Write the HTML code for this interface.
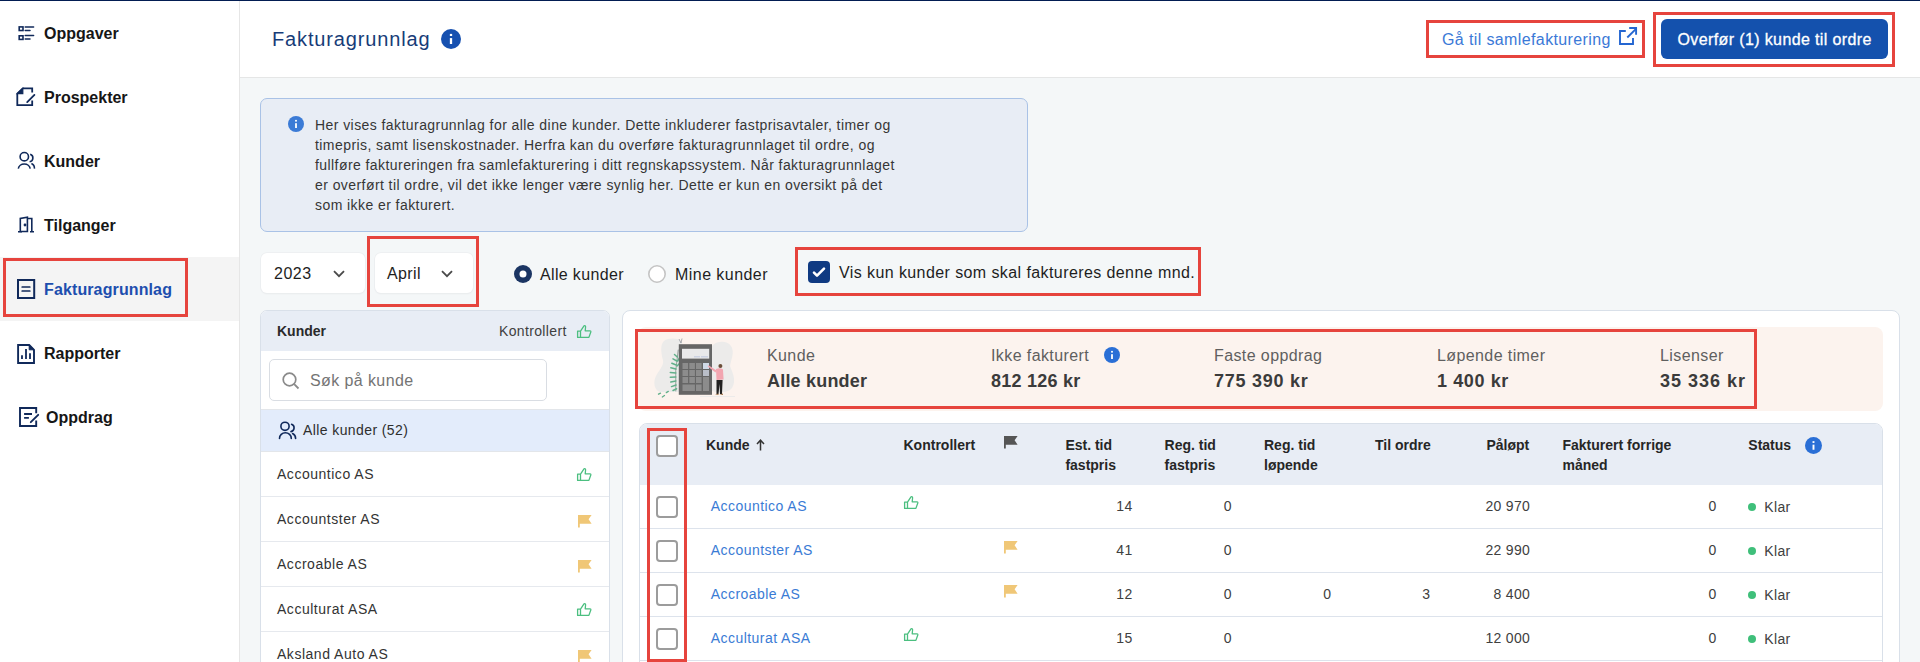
<!DOCTYPE html>
<html><head><meta charset="utf-8">
<style>
*{box-sizing:border-box;margin:0;padding:0}
html,body{width:1920px;height:662px;overflow:hidden;background:#f4f7f8;font-family:"Liberation Sans",sans-serif;color:#222}
.a{position:absolute}
.t{position:absolute;line-height:1;white-space:nowrap}
.red{position:absolute;border:3px solid #e6443d}
svg{position:absolute;overflow:visible}
</style></head><body>
<!-- top strip -->
<div class="a" style="left:0;top:0;width:1920px;height:1px;background:#021d52;z-index:5"></div>

<!-- SIDEBAR -->
<div class="a" id="sidebar" style="left:0;top:1px;width:240px;height:661px;background:#fff;border-right:1px solid #e6e6e6">
</div>
<div class="a" style="left:0;top:257px;width:239px;height:64px;background:#f4f4f4"></div>


<!-- nav icons -->
<svg style="left:0;top:0" width="60" height="440" viewBox="0 0 60 440">
 <g fill="none" stroke="#10295a" stroke-width="1.6">
  <rect x="19.2" y="26.9" width="3.8" height="3.6"/>
  <rect x="19.2" y="35.8" width="3.8" height="3.6"/>
  <path d="M25.2 27.1 H33.6 M25.2 30.5 H30 M25.2 35.6 H33.6 M25.2 38.9 H30" stroke-width="1.5" stroke-linecap="round"/>
 </g>
 <g fill="none" stroke="#10295a" stroke-width="1.8">
  <path d="M32.2 92.5 V88.3 H22.8 L17.3 93.6 V105.2 H32.2 V100.6"/>
  <path d="M17.3 93.6 H22.8 V88.3 Z" fill="#10295a" stroke-width="1.2"/>
  <path d="M27.2 102.1 L34.4 94.9" stroke-linecap="round"/>
 </g>
 <g fill="none" stroke="#10295a" stroke-width="1.6">
  <circle cx="24.3" cy="156.7" r="4.2"/>
  <path d="M18.3 168.6 A6 5.2 0 0 1 30.2 168.6"/>
  <path d="M30.2 154.3 A3.8 3.8 0 0 1 29.6 161.7"/>
  <path d="M31.4 163.6 A5 5 0 0 1 34.4 168.6"/>
 </g>
 <g fill="none" stroke="#10295a" stroke-width="1.6">
  <path d="M20.3 231.5 V218.5 L27.4 217.3 V231.5 Z"/>
  <path d="M27.4 218.5 H31.8 V231.8"/>
  <path d="M18 231.8 H22 M30 231.8 H34"/>
  <circle cx="25" cy="225" r="0.6" fill="#10295a"/>
 </g>
 <g fill="none" stroke="#10295a" stroke-width="2">
  <rect x="18" y="280" width="16.2" height="18"/>
  <path d="M22.2 287 H29.8 M22.2 291 H29.8" stroke-width="1.7" stroke-linecap="round"/>
 </g>
 <g fill="none" stroke="#10295a" stroke-width="1.9">
  <path d="M18.1 345 H29.2 L34 349.8 V363 H18.1 Z"/>
  <path d="M29.2 345 V349.8 H34 Z" fill="#10295a" stroke-width="1"/>
  <path d="M22 355.3 V358.9 M26 349.1 V358.9 M30 353.2 V358.9" stroke-width="1.8"/>
 </g>
 <g fill="none" stroke="#10295a" stroke-width="1.9">
  <path d="M36.2 413.2 V408 H20 V426 H36.2 V420.5"/>
  <path d="M24.1 414 H32 M24.1 417.9 H28.9" stroke-width="1.8"/>
  <path d="M30.8 422.2 L38.2 414.8" stroke-linecap="round"/>
 </g>
</svg>

<!-- nav text -->
<div class="t" style="left:44px;top:25.7px;font-size:16px;font-weight:700;color:#161616">Oppgaver</div>
<div class="t" style="left:44px;top:89.7px;font-size:16px;font-weight:700;color:#161616">Prospekter</div>
<div class="t" style="left:44px;top:153.7px;font-size:16px;font-weight:700;color:#161616">Kunder</div>
<div class="t" style="left:44px;top:217.7px;font-size:16px;font-weight:700;color:#161616">Tilganger</div>
<div class="t" style="left:44px;top:281.7px;font-size:16px;font-weight:700;color:#1d4eae;letter-spacing:0.12px">Fakturagrunnlag</div>
<div class="t" style="left:44px;top:345.7px;font-size:16px;font-weight:700;color:#161616">Rapporter</div>
<div class="t" style="left:46px;top:409.7px;font-size:16px;font-weight:700;color:#161616">Oppdrag</div>

<div class="red" style="left:3px;top:258px;width:185px;height:59px"></div>
<!-- HEADER -->
<div class="a" style="left:240px;top:1px;width:1680px;height:77px;background:#fff;border-bottom:1px solid #e5e6e6"></div>
<div class="t" style="left:272px;top:29px;font-size:20px;color:#173c78;letter-spacing:0.85px">Fakturagrunnlag</div>
<svg style="left:441px;top:29px" width="20" height="20" viewBox="0 0 20 20"><circle cx="10" cy="10" r="10" fill="#1650b0"/><rect x="8.85" y="9.1" width="2.3" height="5.9" fill="#fff"/><rect x="8.85" y="4.9" width="2.3" height="2.1" fill="#fff"/></svg>

<div class="t" style="left:1442px;top:31.8px;font-size:16px;color:#3b79d7;letter-spacing:0.38px">Gå til samlefakturering</div>
<svg style="left:1612px;top:22px" width="30" height="28" viewBox="1612 22 30 28"><g fill="none" stroke="#2466d1" stroke-width="1.9"><path d="M1625.8 31 H1620 V44 H1633 V38.1"/><path d="M1629.2 28 H1636.1 V34.7"/><path d="M1627.3 37.5 L1636 28.8"/></g></svg>
<div class="red" style="left:1426px;top:20px;width:219px;height:38px"></div>
<div class="a" style="left:1661px;top:19px;width:227px;height:40px;background:#1451ad;border-radius:6px"></div>
<div class="t" style="left:1677.5px;top:31.8px;font-size:16px;color:#fff;letter-spacing:0.38px;-webkit-text-stroke:0.3px #fff">Overfør (1) kunde til ordre</div>
<div class="red" style="left:1653px;top:12px;width:242px;height:55px"></div>

<!-- INFO BOX -->
<div class="a" style="left:260px;top:98px;width:768px;height:134px;background:#e8edf5;border:1px solid #a9c2e6;border-radius:7px"></div>
<svg style="left:288px;top:116px" width="16" height="16" viewBox="0 0 16 16"><circle cx="8" cy="8" r="8" fill="#3b7bd6"/><rect x="7.1" y="7.2" width="1.8" height="4.8" fill="#fff"/><rect x="7.1" y="3.9" width="1.8" height="1.7" fill="#fff"/></svg>
<div class="a" style="left:315px;top:115px;font-size:14px;line-height:20px;color:#363636;letter-spacing:0.43px;white-space:nowrap">Her vises fakturagrunnlag for alle dine kunder. Dette inkluderer fastprisavtaler, timer og<br>timepris, samt lisenskostnader. Herfra kan du overføre fakturagrunnlaget til ordre, og<br>fullføre faktureringen fra samlefakturering i ditt regnskapssystem. Når fakturagrunnlaget<br>er overført til ordre, vil det ikke lenger være synlig her. Dette er kun en oversikt på det<br>som ikke er fakturert.</div>

<!-- FILTERS -->
<div class="a" style="left:261px;top:252.5px;width:104px;height:40.5px;background:#fff;border-radius:6px;box-shadow:0 0 0 0.8px #eceef0,0 1px 2px rgba(0,0,0,0.06)"></div>
<div class="t" style="left:274px;top:265.5px;font-size:16px;color:#1e1e1e;letter-spacing:0.5px">2023</div>
<svg style="left:333px;top:270px" width="12" height="8" viewBox="0 0 12 8"><path d="M1 1.2 L6 6.2 L11 1.2" fill="none" stroke="#4a4a4a" stroke-width="1.8"/></svg>
<div class="a" style="left:375px;top:252.5px;width:98px;height:40.5px;background:#fff;border-radius:6px;box-shadow:0 0 0 0.8px #eceef0,0 1px 2px rgba(0,0,0,0.06)"></div>
<div class="t" style="left:387px;top:265.5px;font-size:16px;color:#1e1e1e;letter-spacing:0.4px">April</div>
<svg style="left:441px;top:270px" width="12" height="8" viewBox="0 0 12 8"><path d="M1 1.2 L6 6.2 L11 1.2" fill="none" stroke="#4a4a4a" stroke-width="1.8"/></svg>
<div class="red" style="left:367px;top:236px;width:112px;height:71px"></div>

<svg style="left:514px;top:265px" width="18" height="18" viewBox="0 0 18 18"><circle cx="9" cy="9" r="9" fill="#1b3563"/><circle cx="9" cy="9" r="3.5" fill="#fff"/></svg>
<div class="t" style="left:540px;top:267px;font-size:16px;color:#1e1e1e;letter-spacing:0.35px">Alle kunder</div>
<svg style="left:648px;top:265px" width="18" height="18" viewBox="0 0 18 18"><circle cx="9" cy="9" r="8.2" fill="#fff" stroke="#c4c4c4" stroke-width="1.6"/></svg>
<div class="t" style="left:675px;top:267px;font-size:16px;color:#1e1e1e;letter-spacing:0.45px">Mine kunder</div>

<svg style="left:808px;top:261px" width="22" height="22" viewBox="0 0 22 22"><rect x="0" y="0" width="22" height="22" rx="4" fill="#0f3a82"/><path d="M6 11.6 L9 14.6 L16 7.6" fill="none" stroke="#fff" stroke-width="2.6" stroke-linecap="round" stroke-linejoin="round"/></svg>
<div class="t" style="left:839px;top:264.5px;font-size:16px;color:#1e1e1e;letter-spacing:0.41px">Vis kun kunder som skal faktureres denne mnd.</div>
<div class="red" style="left:795px;top:247px;width:406px;height:49px"></div>

<!-- LEFT PANEL -->
<div class="a" style="left:260px;top:310px;width:350px;height:360px;background:#fff;border:1px solid #d9e0e9;border-radius:7px;overflow:hidden">
  <div class="a" style="left:0;top:0;width:350px;height:40px;background:#e8edf5"></div>
  <div class="a" style="left:0;top:98px;width:350px;height:42px;background:#e3ecfb"></div>
  <div class="a" style="left:0;top:98px;width:350px;height:1px;background:#e3e6ea"></div>
  <div class="a" style="left:0;top:140px;width:350px;height:1px;background:#e3e6ea"></div>
  <div class="a" style="left:0;top:185px;width:350px;height:1px;background:#e6e9ee"></div>
  <div class="a" style="left:0;top:230px;width:350px;height:1px;background:#e6e9ee"></div>
  <div class="a" style="left:0;top:275px;width:350px;height:1px;background:#e6e9ee"></div>
  <div class="a" style="left:0;top:320px;width:350px;height:1px;background:#e6e9ee"></div>
</div>
<div class="t" style="left:277px;top:324px;font-size:14px;font-weight:700;color:#2a2a2a">Kunder</div>
<div class="t" style="left:499px;top:324px;font-size:14px;color:#404040;letter-spacing:0.35px">Kontrollert</div>
<div class="a" style="left:269px;top:359px;width:278px;height:42px;border:1px solid #d9dde3;border-radius:5px;background:#fff"></div>
<svg style="left:281.7px;top:371.6px" width="18" height="18" viewBox="0 0 18 18"><circle cx="7.5" cy="7.5" r="6.3" fill="none" stroke="#8a8a8a" stroke-width="1.7"/><path d="M12.2 12.2 L16.5 16.5" stroke="#8a8a8a" stroke-width="1.8"/></svg>
<div class="t" style="left:310px;top:373px;font-size:16px;color:#747474;letter-spacing:0.4px">Søk på kunde</div>
<div class="t" style="left:303px;top:423px;font-size:14px;color:#2e2e2e;letter-spacing:0.4px">Alle kunder (52)</div>
<div class="t" style="left:277px;top:467px;font-size:14px;color:#333;letter-spacing:0.52px">Accountico AS</div>
<div class="t" style="left:277px;top:512px;font-size:14px;color:#333;letter-spacing:0.52px">Accountster AS</div>
<div class="t" style="left:277px;top:557px;font-size:14px;color:#333;letter-spacing:0.52px">Accroable AS</div>
<div class="t" style="left:277px;top:602px;font-size:14px;color:#333;letter-spacing:0.52px">Acculturat ASA</div>
<div class="t" style="left:277px;top:647px;font-size:14px;color:#333;letter-spacing:0.52px">Aksland Auto AS</div>

<svg style="left:576.9px;top:325.4px" width="16" height="15" viewBox="0 0 16 15"><path d="M0.6 6.1 H3.5 V12.4 H0.6 Z M3.5 6.1 L7 0.8 Q8.4 0.3 8.6 1.8 L8.2 5.8 H13 Q14 6 13.8 7 L11.9 12.4 H3.5" fill="none" stroke="#4cbf80" stroke-width="1.3" stroke-linejoin="round"/></svg>
<svg style="left:576.9px;top:468.4px" width="16" height="15" viewBox="0 0 16 15"><path d="M0.6 6.1 H3.5 V12.4 H0.6 Z M3.5 6.1 L7 0.8 Q8.4 0.3 8.6 1.8 L8.2 5.8 H13 Q14 6 13.8 7 L11.9 12.4 H3.5" fill="none" stroke="#4cbf80" stroke-width="1.3" stroke-linejoin="round"/></svg>
<svg style="left:578px;top:515px" width="14" height="13" viewBox="0 0 14 13"><path d="M0 0 H13.6 L10.6 4.3 L13.6 8.8 H1.8 V12.6 H0 Z" fill="#f0c777"/></svg>
<svg style="left:578px;top:560px" width="14" height="13" viewBox="0 0 14 13"><path d="M0 0 H13.6 L10.6 4.3 L13.6 8.8 H1.8 V12.6 H0 Z" fill="#f0c777"/></svg>
<svg style="left:576.9px;top:603.4px" width="16" height="15" viewBox="0 0 16 15"><path d="M0.6 6.1 H3.5 V12.4 H0.6 Z M3.5 6.1 L7 0.8 Q8.4 0.3 8.6 1.8 L8.2 5.8 H13 Q14 6 13.8 7 L11.9 12.4 H3.5" fill="none" stroke="#4cbf80" stroke-width="1.3" stroke-linejoin="round"/></svg>
<svg style="left:578px;top:650px" width="14" height="13" viewBox="0 0 14 13"><path d="M0 0 H13.6 L10.6 4.3 L13.6 8.8 H1.8 V12.6 H0 Z" fill="#f0c777"/></svg>
<svg style="left:278px;top:421px" width="20" height="20" viewBox="0 0 20 20"><g fill="none" stroke="#10295a" stroke-width="1.6" stroke-linecap="round"><circle cx="7" cy="5.3" r="4.1"/><path d="M1.5 17.4 A5.9 5.6 0 0 1 13.3 17.4"/><path d="M13.6 3.3 A3.8 3.8 0 0 1 13 10.6"/><path d="M14.6 12.5 A5.5 5.5 0 0 1 17.6 17.4"/></g></svg>
<!-- RIGHT PANEL -->
<div class="a" style="left:622px;top:310px;width:1278px;height:360px;background:#fff;border:1px solid #d9e0e9;border-radius:8px"></div>
<div class="a" style="left:638px;top:327px;width:1245px;height:84px;background:#fcf3ee;border-radius:8px"></div>

<svg style="left:650px;top:332px" width="90" height="72" viewBox="650 332 90 72">
<path d="M668 339 C676 337 684 340 682 346 L682 392 L660 392 C654 390 653 382 656 376 C659 370 664 366 663 360 C661 352 659 341 668 339 Z" fill="#ecebea"/>
<path d="M712 346 C716 341 727 340 731 346 C735 352 731 360 730 366 C732 372 737 380 732 388 C728 393 718 393 712 391 Z" fill="#ecebea"/>
<g stroke="#62b08a" stroke-width="1.5" stroke-linecap="round" fill="none">
<path d="M678.2 350 Q674.5 370 675.8 391" stroke="#7c8a84" stroke-width="0.8"/>
<path d="M677.3 357 L674.5 354.5 M676.8 361 L673 358.8 M676.2 365 L671.8 363.2 M675.9 369 L670.8 367.8 M675.8 373 L670.3 372.5 M675.8 377 L670.3 377.2 M675.9 381 L670.8 382 M676.1 385 L671.5 386.6 M676.6 388.8 L673 390.5"/>
<path d="M677.6 361 L679.5 358 M677 366 L679.5 363.5" />
<path d="M658.5 394.2 L660.5 393.2 M662.3 397 L664.5 395.5 M666.3 392.6 L668.3 391.4" stroke-width="1.3"/>
</g>
<path d="M679 339 L681 343 M682 338.5 L681 343" stroke="#8a8f96" stroke-width="0.7"/>
<rect x="678.8" y="344.2" width="33.2" height="50.6" fill="#666"/>
<rect x="682" y="348.8" width="27.2" height="9.8" fill="#e9e9ea"/>
<rect x="694" y="356.2" width="6" height="1.2" fill="#c5cde0"/><rect x="701" y="356.2" width="7" height="1.2" fill="#c5cde0"/>
<g fill="#8c8c8c">
<rect x="682.5" y="363" width="5.6" height="6"/><rect x="689.3" y="363" width="5.6" height="6"/><rect x="696" y="363" width="5.6" height="6"/>
<rect x="682.5" y="370" width="5.6" height="6"/><rect x="689.3" y="370" width="5.6" height="6"/><rect x="696" y="370" width="5.6" height="6"/>
<rect x="682.5" y="377" width="5.6" height="6"/><rect x="689.3" y="377" width="5.6" height="6"/><rect x="696" y="377" width="5.6" height="6"/>
<rect x="682.5" y="384.5" width="12.4" height="6.5"/><rect x="696" y="384.5" width="5.6" height="6.5"/>
<rect x="703" y="377" width="6" height="14"/>
</g>
<rect x="703" y="363" width="6" height="6" fill="#cfd9e6"/><rect x="703" y="370" width="6" height="6" fill="#b9bec8"/>
<circle cx="720.4" cy="366" r="2" fill="#6b4f3a"/>
<path d="M716 369 Q720 367.5 723 369.5 L723.6 379.5 L716.5 380 Z" fill="#f2a5b0"/>
<path d="M716.5 370.5 L708.5 365.2 L707.8 366.5 L715.5 372.5 Z" fill="#f2a5b0"/>
<path d="M716.5 380 L722.6 380 L722 394 L720 394 L719.6 384 L718.5 394 L716.5 394 Z" fill="#222"/>
<path d="M715 394.5 L718.5 393.5 L718.5 395 Z M719.5 394.5 L723 393.5 L723 395 Z" fill="#a0784e"/>
<path d="M700 396.5 H735" stroke="#ecebea" stroke-width="1"/>
</svg>
<div class="t" style="left:767px;top:348px;font-size:16px;color:#5f5f5f;letter-spacing:0.4px">Kunde</div>
<div class="t" style="left:767px;top:371.8px;font-size:18px;font-weight:700;color:#3b3b3b;letter-spacing:0.2px">Alle kunder</div>
<div class="t" style="left:991px;top:348px;font-size:16px;color:#5f5f5f;letter-spacing:0.4px">Ikke fakturert</div>
<svg style="left:1104px;top:347px" width="16" height="16" viewBox="0 0 16 16"><circle cx="8" cy="8" r="8" fill="#2a6fd6"/><rect x="7.1" y="7.2" width="1.8" height="4.8" fill="#fff"/><rect x="7.1" y="3.9" width="1.8" height="1.7" fill="#fff"/></svg>
<div class="t" style="left:991px;top:371.8px;font-size:18px;font-weight:700;color:#3b3b3b;letter-spacing:0.25px">812 126 kr</div>
<div class="t" style="left:1214px;top:348px;font-size:16px;color:#5f5f5f;letter-spacing:0.4px">Faste oppdrag</div>
<div class="t" style="left:1214px;top:371.8px;font-size:18px;font-weight:700;color:#3b3b3b;letter-spacing:0.75px">775 390 kr</div>
<div class="t" style="left:1437px;top:348px;font-size:16px;color:#5f5f5f;letter-spacing:0.4px">Løpende timer</div>
<div class="t" style="left:1437px;top:371.8px;font-size:18px;font-weight:700;color:#3b3b3b;letter-spacing:0.6px">1 400 kr</div>
<div class="t" style="left:1660px;top:348px;font-size:16px;color:#5f5f5f;letter-spacing:0.4px">Lisenser</div>
<div class="t" style="left:1660px;top:371.8px;font-size:18px;font-weight:700;color:#3b3b3b;letter-spacing:1.0px">35 336 kr</div>
<div class="red" style="left:635px;top:329px;width:122px;height:80px;width:1122px"></div>

<!-- TABLE -->
<div class="a" style="left:639px;top:423px;width:1244px;height:250px;background:#fff;border:1px solid #d9e0e9;border-radius:8px;overflow:hidden">
  <div class="a" style="left:0;top:0;width:1244px;height:61px;background:#e8edf5"></div>
  <div class="a" style="left:0;top:104px;width:1244px;height:1px;background:#dde3ec"></div>
  <div class="a" style="left:0;top:148px;width:1244px;height:1px;background:#dde3ec"></div>
  <div class="a" style="left:0;top:192px;width:1244px;height:1px;background:#dde3ec"></div>
  <div class="a" style="left:0;top:236px;width:1244px;height:1px;background:#dde3ec"></div>
</div>

<!-- table content -->
<div class="a" style="left:656px;top:435px;width:22px;height:22px;border:2px solid #9c9c9c;border-radius:4px;background:#fff"></div>
<div class="t" style="left:706px;top:438.15px;font-size:14px;font-weight:700;color:#262626">Kunde</div>
<svg style="left:756px;top:439px" width="9" height="12" viewBox="0 0 9 12"><path d="M4.5 11.5 V1.5 M1 5 L4.5 1.2 L8 5" fill="none" stroke="#333" stroke-width="1.5"/></svg>
<div class="t" style="left:903.5px;top:438.15px;font-size:14px;font-weight:700;color:#262626">Kontrollert</div>
<svg style="left:1004px;top:436px" width="14" height="13" viewBox="0 0 14 13"><path d="M0 0 H13.6 L10.6 4.3 L13.6 8.8 H1.8 V12.6 H0 Z" fill="#555555"/></svg>
<div class="a" style="left:1065.4px;top:435.15px;line-height:20px;white-space:nowrap;font-size:14px;font-weight:700;color:#262626">Est. tid<br>fastpris</div>
<div class="a" style="left:1164.6px;top:435.15px;line-height:20px;white-space:nowrap;font-size:14px;font-weight:700;color:#262626">Reg. tid<br>fastpris</div>
<div class="a" style="left:1264px;top:435.15px;line-height:20px;white-space:nowrap;font-size:14px;font-weight:700;color:#262626">Reg. tid<br>løpende</div>
<div class="t" style="left:1375px;top:438.15px;font-size:14px;font-weight:700;color:#262626">Til ordre</div>
<div class="t" style="right:390.79999999999995px;top:438.15px;font-size:14px;font-weight:700;color:#262626">Påløpt</div>
<div class="a" style="left:1562.5px;top:435.15px;line-height:20px;white-space:nowrap;font-size:14px;font-weight:700;color:#262626">Fakturert forrige<br>måned</div>
<div class="t" style="left:1748.3px;top:438.15px;font-size:14px;font-weight:700;color:#262626">Status</div>
<svg style="left:1805px;top:437px" width="17" height="17" viewBox="0 0 16 16"><circle cx="8" cy="8" r="8" fill="#2a6fd6"/><rect x="7.1" y="7.2" width="1.8" height="4.8" fill="#fff"/><rect x="7.1" y="3.9" width="1.8" height="1.7" fill="#fff"/></svg>
<div class="a" style="left:656px;top:496px;width:22px;height:22px;border:2px solid #9c9c9c;border-radius:4px;background:#fff"></div>
<div class="t" style="left:710.8px;top:499.15px;font-size:14px;color:#3a7bd5;letter-spacing:0.45px">Accountico AS</div>
<svg style="left:904.2px;top:495.6px" width="16" height="15" viewBox="0 0 16 15"><path d="M0.6 6.1 H3.5 V12.4 H0.6 Z M3.5 6.1 L7 0.8 Q8.4 0.3 8.6 1.8 L8.2 5.8 H13 Q14 6 13.8 7 L11.9 12.4 H3.5" fill="none" stroke="#4cbf80" stroke-width="1.3" stroke-linejoin="round"/></svg>
<div class="t" style="right:787.8px;top:499.15px;font-size:14px;color:#404040;letter-spacing:0.3px;margin-right:-0.3px">14</div>
<div class="t" style="right:688.4px;top:499.15px;font-size:14px;color:#404040;letter-spacing:0.3px;margin-right:-0.3px">0</div>
<div class="t" style="right:390.2px;top:499.15px;font-size:14px;color:#404040;letter-spacing:0.3px;margin-right:-0.3px">20 970</div>
<div class="t" style="right:203.8px;top:499.15px;font-size:14px;color:#404040;letter-spacing:0.3px;margin-right:-0.3px">0</div>
<div class="a" style="left:1748px;top:503px;width:8px;height:8px;border-radius:50%;background:#3fbf7a"></div>
<div class="t" style="left:1764.3px;top:499.85px;font-size:14px;color:#404040;letter-spacing:0.35px">Klar</div>
<div class="a" style="left:656px;top:540px;width:22px;height:22px;border:2px solid #9c9c9c;border-radius:4px;background:#fff"></div>
<div class="t" style="left:710.8px;top:543.15px;font-size:14px;color:#3a7bd5;letter-spacing:0.45px">Accountster AS</div>
<svg style="left:1004px;top:541px" width="14" height="13" viewBox="0 0 14 13"><path d="M0 0 H13.6 L10.6 4.3 L13.6 8.8 H1.8 V12.6 H0 Z" fill="#f0c777"/></svg>
<div class="t" style="right:787.8px;top:543.15px;font-size:14px;color:#404040;letter-spacing:0.3px;margin-right:-0.3px">41</div>
<div class="t" style="right:688.4px;top:543.15px;font-size:14px;color:#404040;letter-spacing:0.3px;margin-right:-0.3px">0</div>
<div class="t" style="right:390.2px;top:543.15px;font-size:14px;color:#404040;letter-spacing:0.3px;margin-right:-0.3px">22 990</div>
<div class="t" style="right:203.8px;top:543.15px;font-size:14px;color:#404040;letter-spacing:0.3px;margin-right:-0.3px">0</div>
<div class="a" style="left:1748px;top:547px;width:8px;height:8px;border-radius:50%;background:#3fbf7a"></div>
<div class="t" style="left:1764.3px;top:543.85px;font-size:14px;color:#404040;letter-spacing:0.35px">Klar</div>
<div class="a" style="left:656px;top:584px;width:22px;height:22px;border:2px solid #9c9c9c;border-radius:4px;background:#fff"></div>
<div class="t" style="left:710.8px;top:587.15px;font-size:14px;color:#3a7bd5;letter-spacing:0.45px">Accroable AS</div>
<svg style="left:1004px;top:585px" width="14" height="13" viewBox="0 0 14 13"><path d="M0 0 H13.6 L10.6 4.3 L13.6 8.8 H1.8 V12.6 H0 Z" fill="#f0c777"/></svg>
<div class="t" style="right:787.8px;top:587.15px;font-size:14px;color:#404040;letter-spacing:0.3px;margin-right:-0.3px">12</div>
<div class="t" style="right:688.4px;top:587.15px;font-size:14px;color:#404040;letter-spacing:0.3px;margin-right:-0.3px">0</div>
<div class="t" style="right:588.9px;top:587.15px;font-size:14px;color:#404040;letter-spacing:0.3px;margin-right:-0.3px">0</div>
<div class="t" style="right:489.9px;top:587.15px;font-size:14px;color:#404040;letter-spacing:0.3px;margin-right:-0.3px">3</div>
<div class="t" style="right:390.2px;top:587.15px;font-size:14px;color:#404040;letter-spacing:0.3px;margin-right:-0.3px">8 400</div>
<div class="t" style="right:203.8px;top:587.15px;font-size:14px;color:#404040;letter-spacing:0.3px;margin-right:-0.3px">0</div>
<div class="a" style="left:1748px;top:591px;width:8px;height:8px;border-radius:50%;background:#3fbf7a"></div>
<div class="t" style="left:1764.3px;top:587.85px;font-size:14px;color:#404040;letter-spacing:0.35px">Klar</div>
<div class="a" style="left:656px;top:628px;width:22px;height:22px;border:2px solid #9c9c9c;border-radius:4px;background:#fff"></div>
<div class="t" style="left:710.8px;top:631.15px;font-size:14px;color:#3a7bd5;letter-spacing:0.45px">Acculturat ASA</div>
<svg style="left:904.2px;top:627.6px" width="16" height="15" viewBox="0 0 16 15"><path d="M0.6 6.1 H3.5 V12.4 H0.6 Z M3.5 6.1 L7 0.8 Q8.4 0.3 8.6 1.8 L8.2 5.8 H13 Q14 6 13.8 7 L11.9 12.4 H3.5" fill="none" stroke="#4cbf80" stroke-width="1.3" stroke-linejoin="round"/></svg>
<div class="t" style="right:787.8px;top:631.15px;font-size:14px;color:#404040;letter-spacing:0.3px;margin-right:-0.3px">15</div>
<div class="t" style="right:688.4px;top:631.15px;font-size:14px;color:#404040;letter-spacing:0.3px;margin-right:-0.3px">0</div>
<div class="t" style="right:390.2px;top:631.15px;font-size:14px;color:#404040;letter-spacing:0.3px;margin-right:-0.3px">12 000</div>
<div class="t" style="right:203.8px;top:631.15px;font-size:14px;color:#404040;letter-spacing:0.3px;margin-right:-0.3px">0</div>
<div class="a" style="left:1748px;top:635px;width:8px;height:8px;border-radius:50%;background:#3fbf7a"></div>
<div class="t" style="left:1764.3px;top:631.85px;font-size:14px;color:#404040;letter-spacing:0.35px">Klar</div>
<!-- /table content -->
<div class="red" style="left:647px;top:428px;width:40px;height:234px"></div>
</body></html>
